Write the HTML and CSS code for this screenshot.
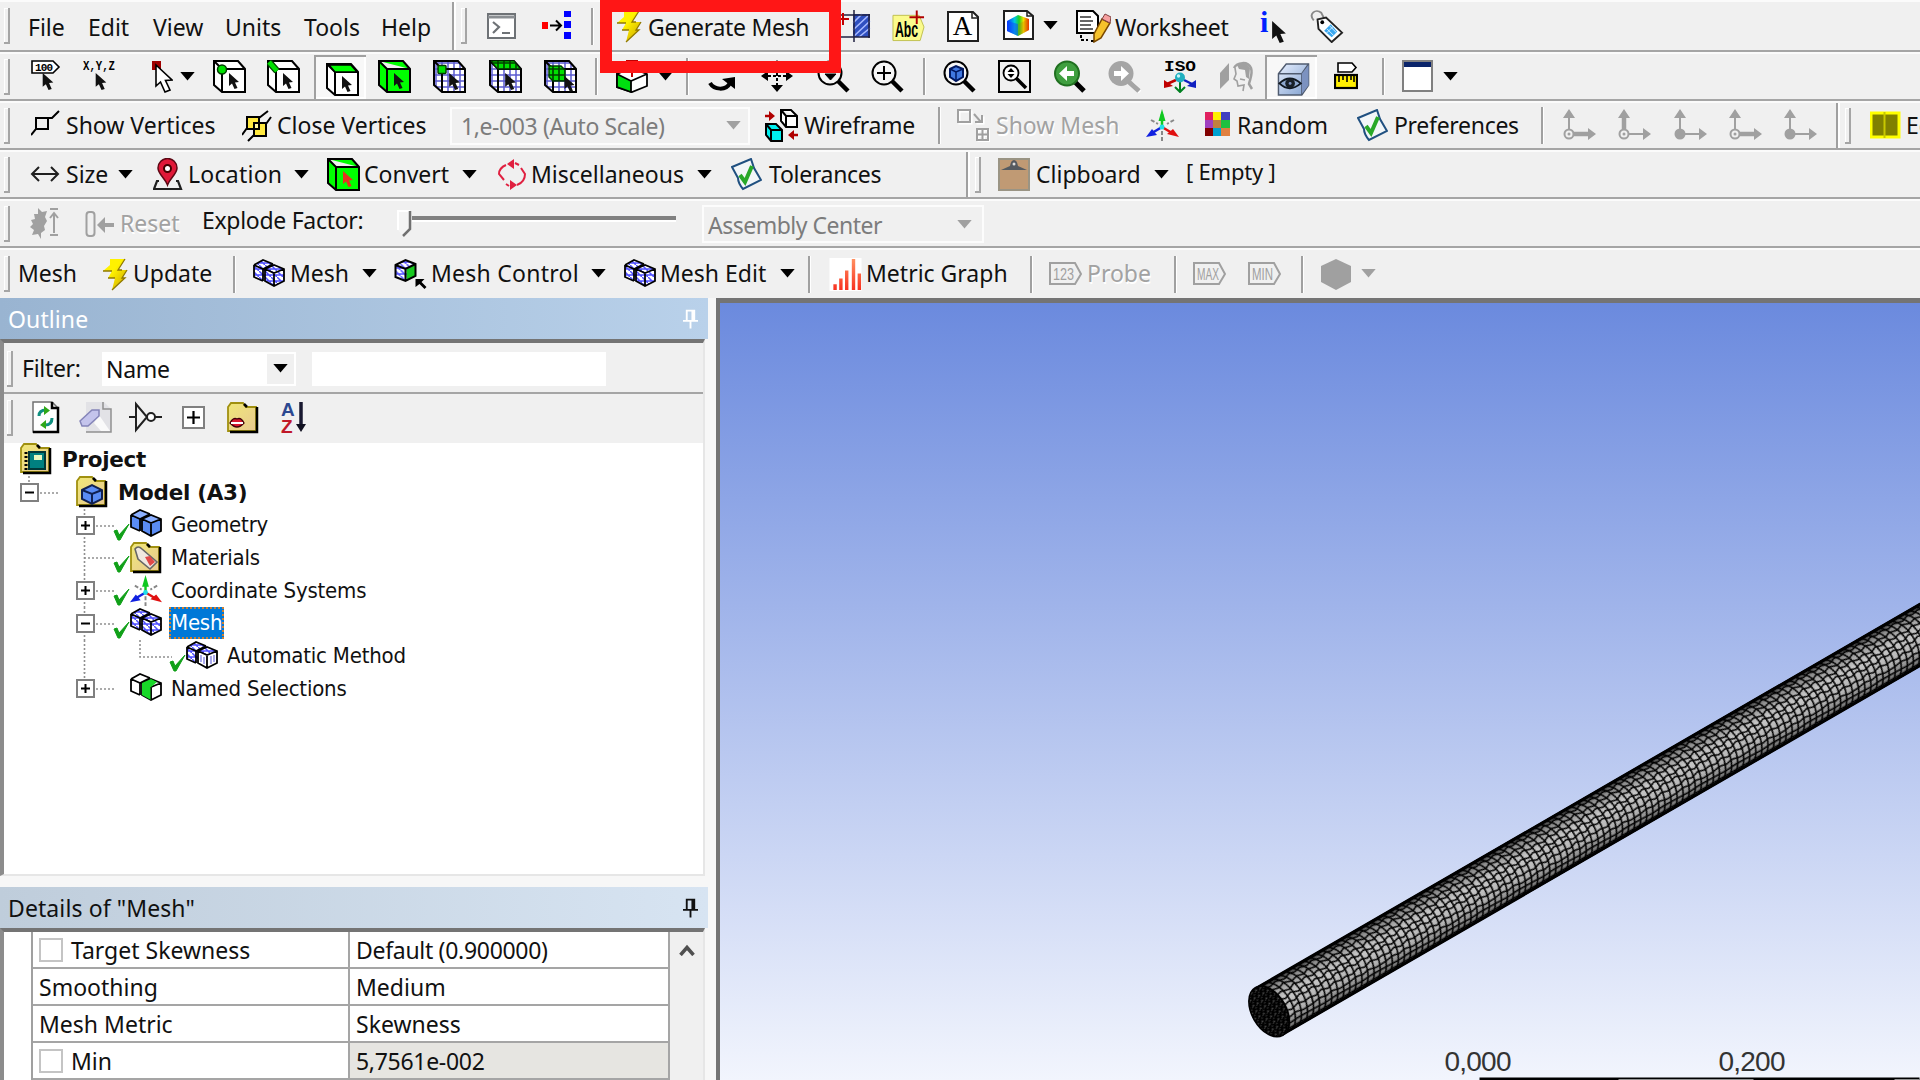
FILE: index.html
```html
<!DOCTYPE html>
<html lang="en">
<head>
<meta charset="utf-8">
<title>Mechanical - Mesh</title>
<link rel="stylesheet" href="styles.css">
</head>
<body>
<svg class="sprite" aria-hidden="true">
  <defs>
    <pattern id="grid" width="6" height="6" patternUnits="userSpaceOnUse"><path d="M0 3H6M3 0V6" stroke="#5a5ad0" stroke-width="1.5"/></pattern>
    <pattern id="ggrid" width="6" height="6" patternUnits="userSpaceOnUse"><rect width="6" height="6" fill="#00e000"/><path d="M0 3H6M3 0V6" stroke="#003c00" stroke-width="1.6"/></pattern>
    <pattern id="lattice" width="6" height="6" patternUnits="userSpaceOnUse"><rect width="6" height="6" fill="#fff"/><path d="M0 0L6 6M0 4H6" stroke="#5050ff" stroke-width="1.5"/></pattern>
    <linearGradient id="bolt-fill" x1="0" y1="0" x2="1" y2="1"><stop offset=".4" stop-color="#fff200"/><stop offset="1" stop-color="#c8a000"/></linearGradient>
    <linearGradient id="rainbow"><stop offset="0" stop-color="#0030ff"/><stop offset=".35" stop-color="#00c8e0"/><stop offset=".55" stop-color="#20d020"/><stop offset=".75" stop-color="#f0e000"/><stop offset="1" stop-color="#f02000"/></linearGradient>
    <linearGradient id="bars" x1="0" y1="0" x2="0" y2="1"><stop offset="0" stop-color="#ff9060"/><stop offset="1" stop-color="#f83020"/></linearGradient>
    <linearGradient id="folder-fill" x1="0" y1="0" x2="1" y2="1"><stop offset="0" stop-color="#f0e878"/><stop offset="1" stop-color="#e8c890"/></linearGradient>
    <linearGradient id="glass" x1="0" y1="0" x2="1" y2="1"><stop offset="0" stop-color="#e8f0ff"/><stop offset="1" stop-color="#7f9fce"/></linearGradient>
  </defs>

  <symbol id="caret" viewBox="0 0 16 10"><path d="M0 0H16L8 9.500Z" fill="currentColor"/></symbol>
  <symbol id="cursor" viewBox="0 0 10 16"><path d="M0 0V13L3 10.500L5.500 16L8.500 15L6 9.500L10 9Z" fill="currentColor"/></symbol>

  <symbol id="console" viewBox="0 0 33 33"><rect x="1" y="4" width="27" height="24" fill="#fff" stroke="#6e7276" stroke-width="2"/><path d="M1 7H28" stroke="#8a8e92" stroke-width="3"/><path d="M6 12L12 17L6 23M15 23H23" fill="none" stroke="#6e7276" stroke-width="2.200"/></symbol>
  <symbol id="net" viewBox="0 0 33 33"><rect y="12" width="6" height="7" fill="#f00"/><path d="M8 15.500H19M14 10.500L19 15.500L14 20.500" fill="none" stroke="#000" stroke-width="2"/><path d="M22 1h7v6h-7zM22 11h7v7h-7zM22 22h7v7h-7z" fill="#00f"/></symbol>
  <symbol id="bolt" viewBox="0 0 26 33"><path d="M8 1H23L16 12H25L20 20H23L10 32L13 20H6L10 13H1L8 7Z" fill="url(#bolt-fill)"/><path d="M23 1L16 12H20M25 12L20 20H23L10 32M13 20H6M10 13H1" fill="none" stroke="#8f7800" stroke-width="1.300"/></symbol>
  <symbol id="section" viewBox="0 0 33 33"><rect x="12" y="4" width="17" height="23" fill="#2f4fc0"/><path d="M12 13L21 4M12 20L28 5M12 27L29 11M18 27L29 18" stroke="#a8baff" stroke-width="1.600"/><path d="M0 5H29M0 27H29M13 0V32M28 4V28" stroke="#202040" stroke-width="1.500" fill="none"/><path d="M0 9H8M2 3V15" stroke="#c00000" stroke-width="2"/></symbol>
  <symbol id="colorpage" viewBox="0 0 33 33"><path d="M1 1H24L30 6V29H1Z" fill="#fff" stroke="#202020" stroke-width="2"/><path d="M24 1V6H30" fill="none" stroke="#202020" stroke-width="1.500"/><path d="M4 11L15 5L26 9V20L15 26L4 21Z" fill="url(#rainbow)"/><path d="M15 14V26L4 21V11Z" fill="#1040ff" opacity=".5"/><path d="M15 14L26 9V20L15 26Z" fill="#d07000" opacity=".3"/></symbol>
  <symbol id="worksheet" viewBox="0 0 35 33"><path d="M1 1H17L22 6V23H1Z" fill="#fff" stroke="#000" stroke-width="2"/><path d="M5 25V30H12M15 31H18" fill="none" stroke="#000" stroke-width="2" stroke-dasharray="3 2"/><path d="M4 7H15M4 11H17M4 15H15M4 19H17" stroke="#333" stroke-width="1.500"/><path d="M26 9L34 13L25 28L18 32V24Z" fill="#f6c22c" stroke="#7a4800" stroke-width="1.500"/><path d="M26 9L29 4L35 7L34 13Z" fill="#f6a0a0" stroke="#804040"/></symbol>
  <symbol id="tag" viewBox="0 0 35 35"><path d="M4 11C-2 4 6 -2 12 3L15 9" fill="none" stroke="#888" stroke-width="2"/><path d="M8 10L17 8L34 24L23 34L9 20Z" fill="#fff" stroke="#222" stroke-width="2"/><path d="M15 22L22 15L29 23L23 29Z" fill="#3aa8f0"/><path d="M18 20L25 27M21 17L28 24M17 25L25 17" stroke="#d8efff"/><circle cx="13" cy="13" r="2"/></symbol>

  <symbol id="redcursor" viewBox="0 0 22 33"><rect x="1" y="1" width="9" height="9" fill="#a00000"/><path d="M5 5V26L9.500 22L14 32L19 30L14.500 20.500L21 20Z" fill="#fff" stroke="#000" stroke-width="1.600"/></symbol>
  <symbol id="cube" viewBox="0 0 33 33"><path d="M1 1H25L32 9V32H9L1 25Z" fill="#fff"/><path d="M1 1H25L32 9V32H9L1 25ZM1 1L9 9H32M9 9V32" fill="none" stroke="#000" stroke-width="2"/></symbol>
  <symbol id="cubemesh" viewBox="0 0 33 33"><path d="M1 1H25L32 9V32H9L1 25Z" fill="#fff"/><path d="M1 1H25L32 9V32H9L1 25Z" fill="url(#grid)"/><path d="M1 1H25L32 9V32H9L1 25ZM1 1L9 9H32M9 9V32" fill="none" stroke="#000" stroke-width="2"/></symbol>
  <symbol id="c-vertex" viewBox="0 0 33 33"><use href="#cube"/><circle cx="9" cy="9.500" r="4.500" fill="#00e000" stroke="#003c00" stroke-width="1.500"/><use href="#cursor" x="16" y="13" width="10" height="16"/></symbol>
  <symbol id="c-edge" viewBox="0 0 33 33"><use href="#cube"/><path d="M2 2L10 11" stroke="#004000" stroke-width="7"/><path d="M2 2L10 11" stroke="#00e000" stroke-width="4.500"/><use href="#cursor" x="16" y="13" width="10" height="16"/></symbol>
  <symbol id="c-face" viewBox="0 0 33 33"><use href="#cube"/><path d="M3 2H25L31 9H9Z" fill="#0f0" stroke="#000" stroke-width="1.500"/><use href="#cursor" x="16" y="13" width="10" height="16"/></symbol>
  <symbol id="c-body" viewBox="0 0 33 33"><path d="M1 1H25L32 9V32H9L1 25ZM1 1L9 9H32M9 9V32" fill="#0f0" stroke="#000" stroke-width="2"/><use href="#cursor" x="16" y="13" width="10" height="16"/></symbol>
  <symbol id="c-node" viewBox="0 0 33 33"><use href="#cubemesh"/><rect x="5" y="5.500" width="8" height="8" rx="1" fill="#00e000" stroke="#003c00" stroke-width="1.500"/><use href="#cursor" x="16" y="13" width="11" height="17"/></symbol>
  <symbol id="c-elface" viewBox="0 0 33 33"><use href="#cubemesh"/><path d="M2 1H25L31 9H9Z" fill="url(#ggrid)" stroke="#003c00"/><use href="#cursor" x="16" y="13" width="11" height="17"/></symbol>
  <symbol id="c-elem" viewBox="0 0 33 33"><use href="#cubemesh"/><path d="M5 6H17L21 10V21H9L5 17Z" fill="url(#ggrid)" stroke="#003c00" stroke-width="1.500"/><use href="#cursor" x="20" y="16" width="11" height="16"/></symbol>
  <symbol id="extend" viewBox="0 0 33 33"><path d="M1 14L15 8L31 14V26L16 32L1 27Z" fill="#fff" stroke="#000" stroke-width="1.800"/><path d="M1 14L15 21V32L1 27Z" fill="#00e010" stroke="#000" stroke-width="1.800"/><path d="M15 21L31 14" stroke="#000" stroke-width="1.800"/><path d="M16 2V17M10 1H22" stroke="#c00000" stroke-width="2"/></symbol>
  <symbol id="rotate" viewBox="0 0 33 33"><path d="M10 2H18" stroke="#000" stroke-width="2"/><path d="M2 23C6 30 18 31 22 23" fill="none" stroke="#000" stroke-width="4"/><path d="M14 19L27 17V29Z"/></symbol>
  <symbol id="pan" viewBox="0 0 33 33"><path d="M16 3V30M2 16H30" stroke="#000" stroke-width="2" stroke-dasharray="3 2"/><path d="M16 32L10 25H22ZM0 16L7 11V21ZM32 16L25 11V21ZM16 0L10 7H22Z"/></symbol>
  <symbol id="lens" viewBox="0 0 33 33"><circle cx="13" cy="13" r="11.500" fill="#f6f6f6" stroke="#000" stroke-width="2"/><path d="M21 21L31 31" stroke="#000" stroke-width="4.500"/></symbol>
  <symbol id="zoomdown" viewBox="0 0 33 33"><use href="#lens"/><path d="M8 14H19L13.500 20Z" stroke="#000"/></symbol>
  <symbol id="zoomplus" viewBox="0 0 33 33"><use href="#lens"/><path d="M13 6V20M6 13H20" stroke="#000" stroke-width="2"/></symbol>
  <symbol id="zoomfit" viewBox="0 0 33 33"><use href="#lens"/><path d="M7 9L13 6L20 9V17L13 21L7 17Z" fill="#4078e0" stroke="#001860" stroke-width="2"/><path d="M7 9L13 12L20 9M13 12V21" stroke="#001860" stroke-width="1.500" fill="none"/></symbol>
  <symbol id="zoombox" viewBox="0 0 33 33"><rect x="1" y="1" width="31" height="31" fill="none" stroke="#000" stroke-width="2"/><circle cx="13" cy="13" r="7.500" fill="#fff" stroke="#000" stroke-width="1.800"/><path d="M18 18L28 28" stroke="#000" stroke-width="3.500"/><path d="M9.500 12L13 8L16.500 12ZM9.500 14L13 18L16.500 14Z"/></symbol>
  <symbol id="zoomprev" viewBox="0 0 33 33"><path d="M22 22L31 31" stroke="#000" stroke-width="5"/><circle cx="14" cy="13.500" r="12" fill="#3f9f3f" stroke="#207020" stroke-width="2"/><path d="M6 13.500L14 6V11H21V16H14V21Z" fill="#fff"/></symbol>
  <symbol id="zoomnext" viewBox="0 0 33 33"><path d="M24 24L32 32" stroke="#fff" stroke-width="5"/><circle cx="13" cy="13.500" r="12.500" fill="#a5a5a5"/><path d="M21 22L31 31" stroke="#a5a5a5" stroke-width="5"/><path d="M21 13.500L13 6V11H6V16H13V21Z" fill="#fff"/></symbol>
  <symbol id="lookat" viewBox="0 0 35 33"><path d="M1 13L10 3V20L1 29Z" fill="#a0a0a0"/><path d="M15 8C18 2 29 1 32 8C34 14 31 19 30 24L33 29" fill="none" stroke="#a0a0a0" stroke-width="2.500"/><path d="M16 8L17 14L15 19L18 21L19 26L25 25L24 31M21 19L26 20" fill="none" stroke="#a0a0a0" stroke-width="1.600"/><path d="M18 5Q27 1 31 8L30 19L27 17L26 10L20 9Z" fill="#a0a0a0"/></symbol>
  <symbol id="cubeeye" viewBox="0 0 33 34"><path d="M1 11L9 1H32V23L25 33H1Z" fill="url(#glass)" stroke="#505c70" stroke-width="1.500"/><path d="M1 11H25V33M25 11L32 1" fill="none" stroke="#505c70" stroke-width="1.500"/><path d="M25 11L32 2V23L25 32Z" fill="#7c92c0"/><path d="M2 21Q12.500 11 24 21Q12.500 31 2 21Z" fill="#8fa9d0" stroke="#101820" stroke-width="2"/><circle cx="13" cy="21" r="5" fill="#182028"/><circle cx="13" cy="21" r="1.500" fill="#7c92c0"/></symbol>
  <symbol id="ruler" viewBox="0 0 24 33"><path d="M4 3H18L22 7.500L18 12H4Z" fill="#fff" stroke="#000" stroke-width="1.600"/><rect x="1" y="15" width="22" height="13" fill="#ffee00" stroke="#000" stroke-width="2.200"/><path d="M5 15V22M9 15V20M13 15V22M17 15V20M20 15V22" stroke="#000" stroke-width="1.600"/></symbol>
  <symbol id="window" viewBox="0 0 33 33"><rect x="1" y="1" width="29" height="30" fill="#fff" stroke="#808080" stroke-width="2"/><rect x="2" y="2" width="27" height="5" fill="#0a246a"/></symbol>

  <symbol id="vertices" viewBox="0 0 33 33"><path d="M0 26L5 20V9H17V20H5M17 9H21L28 2" fill="none" stroke="#000" stroke-width="2"/></symbol>
  <symbol id="closev" viewBox="0 0 33 33"><path d="M0 26L5 19M5 8H17V20H5Z" fill="#ffe940" stroke="#000" stroke-width="2"/><path d="M12 14H24V27H12Z" fill="#ffe940" stroke="#000" stroke-width="2"/><path d="M12 14H17V20H12Z" fill="#fff7a0" stroke="#000" stroke-width="2"/><path d="M17 9L26 2M24 15L29 8M12 26L6 32" stroke="#000" stroke-width="2"/></symbol>
  <symbol id="wire" viewBox="0 0 33 33"><path d="M16 1H26L32 7V18H21L16 12ZM16 1L21 7H32M21 7V18" fill="#fff" stroke="#000" stroke-width="2"/><path d="M1 15H11L17 21V32H6L1 26Z" fill="#00f0f0" stroke="#000" stroke-width="2"/><path d="M1 15L6 21H17M6 21V32" fill="none" stroke="#000" stroke-width="2"/><path d="M0 7H6M33 26H27" stroke="#b00000" stroke-width="2.500"/><path d="M10 7L4 2V12ZM23 26L29 21V31Z" fill="#b00000"/></symbol>
  <symbol id="showmesh" viewBox="0 0 33 33"><g fill="none" stroke="#fff" stroke-width="2" transform="translate(1.500 1.500)"><path d="M1 1H13V13H1ZM17 5L24 13M25 6V13H18M20 20H31V31H20ZM25.500 20V31M20 25.500H31"/></g><g fill="none" stroke="#a0a0a0" stroke-width="2"><path d="M1 1H13V13H1ZM17 5L24 13M25 6V13H18M20 20H31V31H20ZM25.500 20V31M20 25.500H31"/></g></symbol>
  <symbol id="axes" viewBox="0 0 33 33"><path d="M16 18V5" stroke="#10c820" stroke-width="2.500"/><path d="M16 0L12.500 12H19.500Z" fill="#10c820"/><path d="M16 18L6 24" stroke="#1020e0" stroke-width="2.500"/><path d="M0 28L6 20L11 26Z" fill="#1020e0"/><path d="M16 18L26 24" stroke="#e01010" stroke-width="2.500"/><path d="M33 28L27 20L21 25Z" fill="#e01010"/><path d="M5 11L12 15M28 11L21 15M16 22V33" stroke="#888" stroke-width="2" stroke-dasharray="4 2"/><circle cx="16" cy="18" r="2.500" fill="#20e0e8"/></symbol>
  <symbol id="random" viewBox="0 0 33 33"><path fill="#e02060" d="M0 3h8v8H0z"/><path fill="#fff000" d="M8 3h8v8H8z"/><path fill="#4040c0" d="M16 3h9v8h-9z"/><path fill="#a040c0" d="M0 11h8v8H0z"/><path fill="#c08040" d="M8 11h8v8H8z"/><path fill="#20c040" d="M16 11h9v8h-9z"/><path fill="#800000" d="M0 19h8v8H0z"/><path fill="#00a0d0" d="M8 19h8v8H8z"/><path fill="#e08040" d="M16 19h9v8h-9z"/></symbol>
  <symbol id="prefs" viewBox="0 0 31 33"><path d="M1 9L20 1L23 10L30 22L12 31Q7 25 7 20Z" fill="#f2f6f8" stroke="#205080" stroke-width="2"/><path d="M9 17L14 24L21 8" fill="none" stroke="#28a828" stroke-width="4"/></symbol>
  <symbol id="ax-a" viewBox="0 0 33 33"><path d="M6 20V5M10 25H26" stroke="#a0a0a0" stroke-width="2"/><path d="M6 0L0 9H12ZM33 25L25 19V31Z" fill="#a0a0a0"/><circle cx="6" cy="25" r="4.500" fill="none" stroke="#a0a0a0" stroke-width="2"/><circle cx="6" cy="25" r="1.500" fill="#a0a0a0"/></symbol>
  <symbol id="ax-b" viewBox="0 0 33 33"><path d="M6 25V5M6 25H26" stroke="#a0a0a0" stroke-width="2"/><path d="M6 0L0 9H12ZM33 25L25 19V31Z" fill="#a0a0a0"/><circle cx="6" cy="25" r="5.500" fill="#a0a0a0"/></symbol>
  <symbol id="ax-bold" viewBox="0 0 33 33"><use href="#ax-a"/><path d="M10 25H27" stroke="#a0a0a0" stroke-width="4.500"/></symbol>
  <symbol id="ax-up" viewBox="0 0 33 33"><use href="#ax-a"/><path d="M6 20V5" stroke="#a0a0a0" stroke-width="4.500"/></symbol>
  <symbol id="edges" viewBox="0 0 31 33"><rect x="1" y="4" width="28" height="24" fill="#808000" stroke="#ffff00" stroke-width="3"/><path d="M14.500 3V29" stroke="#c8c800" stroke-width="2"/></symbol>

  <symbol id="size" viewBox="0 0 31 33"><path d="M2 16H28M9 9L2 16L9 23M21 9L28 16L21 23" fill="none" stroke="#202020" stroke-width="2"/></symbol>
  <symbol id="location" viewBox="0 0 31 33"><path d="M6 23H4L1 31H28L25 23H23" fill="none" stroke="#202020" stroke-width="2.200"/><path d="M14.500 27C12 20 5 16 5 10A9.500 9.500 0 0 1 24 10C24 16 17 20 14.500 27Z" fill="#e01838" stroke="#5c0814" stroke-width="1.500"/><circle cx="14.500" cy="10.500" r="3.500" fill="#fff" stroke="#400" stroke-width="2"/></symbol>
  <symbol id="convert" viewBox="0 0 33 33"><path d="M1 1H25L32 9V32H9L1 25ZM1 1L9 9H32M9 9V32" fill="#0f0" stroke="#000" stroke-width="2"/><use href="#cursor" x="16" y="13" width="10" height="16" color="#e83020"/></symbol>
  <symbol id="misc" viewBox="0 0 31 33"><path d="M9 7Q2 10 2 16L7 22M20 27Q28 24 28 16L24 10M18 5L22 7M9 26L12 28" fill="none" stroke="#e02040" stroke-width="2"/><path d="M10 6L17 1V11ZM20 27L13 22V32Z" fill="#e02040"/></symbol>
  <symbol id="clipboard" viewBox="0 0 33 33"><rect x="1" y="1" width="30" height="31" fill="#c09a74" stroke="#9a9484" stroke-width="2"/><path d="M3 12L12 8Q13 2 16 2Q19 2 20 8L29 12Z" fill="#555a60"/><circle cx="16" cy="6" r="1.500" fill="#ddd"/></symbol>

  <symbol id="explode" viewBox="0 0 31 33"><path d="M8 1L12 5L17 4L15 10L17 14L14 19L15 23L11 26V32L8 27L2 28L4 23L0 20L3 17L1 13L5 12L4 7L8 7Z" fill="#a0a0a0"/><path d="M20 2H28M20 28H28M24 26V7M20 11L24 6L28 11" fill="none" stroke="#a0a0a0" stroke-width="2"/></symbol>
  <symbol id="reset" viewBox="0 0 31 33"><rect x="1.500" y="5" width="8" height="24" rx="3" fill="none" stroke="#a0a0a0" stroke-width="2"/><path d="M16 18H29" stroke="#a0a0a0" stroke-width="4"/><path d="M12 18L20 10V26Z" fill="#a0a0a0"/></symbol>

  <symbol id="pair-lines" viewBox="0 0 32 28"><path d="M1 6L10 1L20 5M1 6V18L10 22M1 6L10 10L20 5M10 10V22M12 10L21 6L31 10V22L21 27L12 22ZM12 10L21 14L31 10M21 14V27" fill="none" stroke="#000" stroke-width="1.800"/></symbol>
  <symbol id="geometry" viewBox="0 0 32 28"><path d="M1 6L10 1L20 5L31 10V22L21 27L12 22L1 18Z" fill="#5a8cf4"/><path d="M1 6L10 1L20 5L10 10ZM12 10L21 6L31 10L21 14Z" fill="#8cb0ff"/><use href="#pair-lines"/></symbol>
  <symbol id="mesh" viewBox="0 0 32 28"><path d="M1 6L10 1L20 5L31 10V22L21 27L12 22L1 18Z" fill="url(#lattice)"/><use href="#pair-lines"/></symbol>
  <symbol id="method" viewBox="0 0 32 28"><path d="M1 6L10 1L20 5L31 10V22L21 27L12 22L1 18Z" fill="url(#lattice)"/><path d="M12 10L21 14V27L12 22ZM31 10L21 14V27L31 22Z" fill="#fff"/><path d="M15 14V21M18 16V23M25 15V23M28 14V21" stroke="#7070e0" stroke-width="1.200"/><use href="#pair-lines"/></symbol>
  <symbol id="named" viewBox="0 0 32 28"><path d="M1 6L10 1L20 5L31 10V22L21 27L12 22L1 18Z" fill="#fff"/><use href="#pair-lines"/><path d="M12 10L21 6L27 9L21 14V27L12 22Z" fill="#18d828"/><path d="M21 14V27" stroke="#000"/></symbol>
  <symbol id="meshctl" viewBox="0 0 32 33"><path d="M1 7L11 2L21 6V18L11 23L1 19Z" fill="url(#lattice)"/><path d="M12 10L21 6V18L12 23Z" fill="#18c820"/><path d="M1 7L11 2L21 6V18L11 23L1 19ZM1 7L11 11L21 6M11 11V23" fill="none" stroke="#000" stroke-width="2"/><path d="M21 21H30L27 24L32 29L30 31L25 26L21 29Z"/></symbol>
  <symbol id="metric" viewBox="0 0 33 34"><rect width="33" height="34" fill="#fff"/><path d="M4 27h3.500v6H4zM10 21h3.500v12h-3.500zM16 13h3.500v20h-3.500zM23 1h3.500v32h-3.500zM29 16h3.500v17h-3.500z" fill="url(#bars)"/></symbol>
  <symbol id="hexagon" viewBox="0 0 33 33"><path d="M16 1L31 8V24L16 32L1 24V8Z" fill="#a0a0a0"/></symbol>

  <symbol id="pin" viewBox="0 0 16 20"><path d="M4 1H12V12H4ZM0 12H16M8 12V20" fill="none" stroke="currentColor" stroke-width="2"/><path d="M9 1H12V12H9Z" fill="currentColor"/></symbol>
  <symbol id="refresh" viewBox="0 0 28 33"><path d="M1 1H20L26 7V31H1Z" fill="#fff" stroke="#707070" stroke-width="1.500"/><path d="M20 1V7H26V31H1" fill="none" stroke="#000" stroke-width="2.500"/><path d="M7 15C7 10 10 9 14 9M20 17C20 22 17 24 13 24" fill="none" stroke="#109080" stroke-width="3"/><path d="M12 5L18 9.500L12 14ZM14 19L8 24L14 28Z" fill="#30a818"/></symbol>
  <symbol id="eraser" viewBox="0 0 33 33"><path d="M7 1H25L32 8V31H7Z" fill="#e2e2e6"/><path d="M24 1V8H32V31H7" fill="none" stroke="#909090" stroke-width="1.500"/><path d="M20 14L31 30H22L15 22Z" fill="#fafafa"/><path d="M1 20L13 9L20 9V15L9 25H3Z" fill="#c4c4ec" stroke="#8484b8" stroke-width="1.500"/></symbol>
  <symbol id="notgate" viewBox="0 0 33 33"><path d="M0 16H7M7 3V29L18 16ZM26 16H33" fill="none" stroke="#202020" stroke-width="2"/><circle cx="22" cy="16" r="4" fill="#fff" stroke="#202020" stroke-width="2"/></symbol>
  <symbol id="plusbox" viewBox="0 0 23 23"><rect x="1" y="1" width="21" height="21" fill="#fff" stroke="#808080" stroke-width="2"/><path d="M11.500 5V18M5 11.500H18" stroke="#000" stroke-width="2.200"/></symbol>
  <symbol id="folder" viewBox="0 0 32 32"><path d="M1 5L4 1H16L19 5H29V29H1Z" fill="url(#folder-fill)" stroke="#a09010" stroke-width="1.800"/><path d="M17 2L20 5M30 5V30H3" fill="none" stroke="#000" stroke-width="2.500"/></symbol>
  <symbol id="f-lips" viewBox="0 0 32 32"><use href="#folder"/><path d="M3 21Q6 15 10 17Q14 15 17 21Q10 29 3 21Z" fill="#d81830" stroke="#400008" stroke-width="1.300"/><path d="M4 21H16" stroke="#fff" stroke-width="2"/></symbol>
  <symbol id="f-project" viewBox="0 0 32 32"><use href="#folder"/><rect x="9" y="9" width="16" height="17" fill="#008080" stroke="#003838" stroke-width="2"/><rect x="14" y="12" width="8" height="5" fill="#e8f8c0"/><path d="M6 9V28" stroke="#000" stroke-width="3" stroke-dasharray="2 2"/></symbol>
  <symbol id="f-model" viewBox="0 0 32 32"><use href="#folder"/><path d="M6 14L16 9L26 14V23L16 28L6 23Z" fill="#5a8cf4" stroke="#102050" stroke-width="2"/><path d="M6 14L16 18L26 14M16 18V28" fill="none" stroke="#102050" stroke-width="2"/></symbol>
  <symbol id="f-material" viewBox="0 0 32 32"><use href="#folder"/><path d="M5 7Q8 3 12 7L27 20L20 27L8 17Z" fill="#f0e8e0" stroke="#666" stroke-width="1.600"/><path d="M15 15L20 14L25 20L20 24Z" fill="#e04848"/></symbol>
  <symbol id="check" viewBox="0 0 17 33"><path d="M1 22L4 21L6 26L16 15L7 31H5Z" fill="#10a018" stroke="#10a018"/></symbol>

  <symbol id="t-root" viewBox="0 0 40 33"><path d="M9 0V8M20 17H40" class="dots"/><rect x="1" y="8" width="17" height="17" fill="#fff" stroke="#808080" stroke-width="2"/><path d="M5 16.500H14" stroke="#000" stroke-width="2"/></symbol>
  <symbol id="t-plus" viewBox="0 0 40 33"><path d="M8.500 0V33M20 17H40" class="dots"/><rect x="1" y="8" width="17" height="17" fill="#fff" stroke="#808080" stroke-width="2"/><path d="M5 16.500H14M9.500 12V21" stroke="#000" stroke-width="2"/></symbol>
  <symbol id="t-last" viewBox="0 0 40 33"><path d="M8.500 0V8M20 17H40" class="dots"/><rect x="1" y="8" width="17" height="17" fill="#fff" stroke="#808080" stroke-width="2"/><path d="M5 16.500H14M9.500 12V21" stroke="#000" stroke-width="2"/></symbol>
  <symbol id="t-minus" viewBox="0 0 40 33"><path d="M8.500 0V33M20 17H40" class="dots"/><rect x="1" y="8" width="17" height="17" fill="#fff" stroke="#808080" stroke-width="2"/><path d="M5 16.500H14" stroke="#000" stroke-width="2"/></symbol>
  <symbol id="t-leaf" viewBox="0 0 40 33"><path d="M8.500 0V33M8 17H40" class="dots"/></symbol>
  <symbol id="t-child" viewBox="0 0 96 33"><path d="M8.500 0V33M64 0V17H96" class="dots"/></symbol>
</svg>

<header class="toolbars">
  <nav class="bar bar-menu">
    <i class="grip"></i><span>File</span><span>Edit</span><span>View</span><span>Units</span><span>Tools</span><span>Help</span>
    <i class="edge"></i><i class="grip"></i>
    <svg class="ic"><use href="#console"/></svg>
    <svg class="ic"><use href="#net"/></svg>
    <i class="sep"></i>
    <svg class="ic w26"><use href="#bolt"/></svg><span class="tight">Generate Mesh</span>
    <svg class="ic"><use href="#section"/></svg>
    <svg class="ic" viewBox="0 0 34 33"><path d="M1 5H28L33 17L29 31H1Z" fill="#fbfb8c" stroke="#c0c050"/><text x="3" y="27" class="ic-abc" textLength="24" lengthAdjust="spacingAndGlyphs">Abc</text><path d="M18 7H33M25.500 0V14" stroke="#b00000" stroke-width="2"/></svg>
    <svg class="ic" viewBox="0 0 33 33"><path d="M1 2H26L31 7V31H1Z" fill="#fff" stroke="#202020" stroke-width="2"/><path d="M25 2V8H31" fill="none" stroke="#202020" stroke-width="1.500"/><text x="15.500" y="25" text-anchor="middle" class="ic-serif">A</text></svg>
    <svg class="ic"><use href="#colorpage"/></svg>
    <svg class="caret"><use href="#caret"/></svg>
    <svg class="ic w35"><use href="#worksheet"/></svg><span class="tight">Worksheet</span>
    <svg class="ic w28" viewBox="0 0 28 33"><text x="0" y="22" class="ic-i">i</text><use href="#cursor" x="12" y="11" width="14" height="22"/></svg>
    <svg class="ic w35"><use href="#tag"/></svg>
  </nav>

  <div class="bar bar-select">
    <i class="grip"></i>
    <svg class="ic" viewBox="0 0 33 33"><path d="M1 1H22L28 7L22 13H1Z" fill="#fff" stroke="#000" stroke-width="1.600"/><text x="4" y="11" class="ic-mono" textLength="18">100</text><use href="#cursor" x="11" y="13" width="12" height="17"/></svg>
    <svg class="ic" viewBox="0 0 33 33"><text x="0" y="10" class="ic-xyz" textLength="32" lengthAdjust="spacingAndGlyphs">X,Y,Z</text><use href="#cursor" x="12" y="13" width="12" height="17"/></svg>
    <svg class="ic w22"><use href="#redcursor"/></svg>
    <svg class="caret"><use href="#caret"/></svg>
    <svg class="ic"><use href="#c-vertex"/></svg>
    <svg class="ic"><use href="#c-edge"/></svg>
    <b class="pressed"><svg class="ic"><use href="#c-face"/></svg></b>
    <svg class="ic"><use href="#c-body"/></svg>
    <svg class="ic"><use href="#c-node"/></svg>
    <svg class="ic"><use href="#c-elface"/></svg>
    <svg class="ic"><use href="#c-elem"/></svg>
    <i class="sep"></i>
    <svg class="ic"><use href="#extend"/></svg>
    <svg class="caret"><use href="#caret"/></svg>
    <i class="sep"></i>
    <svg class="ic"><use href="#rotate"/></svg>
    <svg class="ic"><use href="#pan"/></svg>
    <svg class="ic"><use href="#zoomdown"/></svg>
    <svg class="ic"><use href="#zoomplus"/></svg>
    <i class="sep"></i>
    <svg class="ic"><use href="#zoomfit"/></svg>
    <svg class="ic"><use href="#zoombox"/></svg>
    <svg class="ic"><use href="#zoomprev"/></svg>
    <svg class="ic"><use href="#zoomnext"/></svg>
    <svg class="ic" viewBox="0 0 33 33"><text x="0" y="10.500" class="ic-iso" textLength="32" lengthAdjust="spacingAndGlyphs">ISO</text><path d="M16 17V32M11 27L16 32L21 27" stroke="#008020" stroke-width="2" fill="none"/><path d="M12 20L3 24" stroke="#c00000" stroke-width="2.500"/><path d="M0 20V28L9 26Z" fill="#c00000"/><path d="M20 20L28 24" stroke="#1020c0" stroke-width="2.500"/><path d="M32 20V28L23 26Z" fill="#1020c0"/><circle cx="16" cy="17.500" r="5" fill="#20b0c0"/><circle cx="14.500" cy="16" r="1.700" fill="#c8f4f8"/></svg>
    <svg class="ic w35"><use href="#lookat"/></svg>
    <b class="pressed"><svg class="ic"><use href="#cubeeye"/></svg></b>
    <svg class="ic w24"><use href="#ruler"/></svg>
    <i class="sep"></i>
    <svg class="ic"><use href="#window"/></svg>
    <svg class="caret"><use href="#caret"/></svg>
  </div>

  <div class="bar bar-graphics">
    <i class="grip"></i>
    <svg class="ic"><use href="#vertices"/></svg><span>Show Vertices</span>
    <svg class="ic"><use href="#closev"/></svg><span>Close Vertices</span>
    <div class="combo"><span>1,e-003 (Auto Scale)</span><svg class="caret"><use href="#caret"/></svg></div>
    <svg class="ic"><use href="#wire"/></svg><span class="tight">Wireframe</span>
    <i class="sep"></i>
    <svg class="ic"><use href="#showmesh"/></svg><span class="off">Show Mesh</span>
    <svg class="ic"><use href="#axes"/></svg>
    <svg class="ic"><use href="#random"/></svg><span>Random</span>
    <svg class="ic w31"><use href="#prefs"/></svg><span class="tight">Preferences</span>
    <i class="sep"></i>
    <svg class="ic"><use href="#ax-bold"/></svg>
    <svg class="ic"><use href="#ax-up"/></svg>
    <svg class="ic"><use href="#ax-b"/></svg>
    <svg class="ic"><use href="#ax-bold"/></svg>
    <svg class="ic"><use href="#ax-b"/></svg>
    <i class="edge"></i><i class="grip"></i>
    <svg class="ic w31"><use href="#edges"/></svg><span>Edge</span>
  </div>

  <div class="bar bar-size">
    <i class="grip"></i>
    <svg class="ic w31"><use href="#size"/></svg><span>Size</span><svg class="caret"><use href="#caret"/></svg>
    <svg class="ic w31"><use href="#location"/></svg><span class="wide">Location</span><svg class="caret"><use href="#caret"/></svg>
    <svg class="ic"><use href="#convert"/></svg><span>Convert</span><svg class="caret"><use href="#caret"/></svg>
    <svg class="ic w31"><use href="#misc"/></svg><span>Miscellaneous</span><svg class="caret"><use href="#caret"/></svg>
    <svg class="ic w31"><use href="#prefs"/></svg><span class="tight">Tolerances</span>
    <i class="edge"></i><i class="grip"></i>
    <svg class="ic"><use href="#clipboard"/></svg><span>Clipboard</span><svg class="caret"><use href="#caret"/></svg>
    <span class="raised small">[ Empty ]</span>
  </div>

  <div class="bar bar-explode">
    <i class="grip"></i>
    <svg class="ic w31"><use href="#explode"/></svg>
    <svg class="ic w31"><use href="#reset"/></svg><span class="off">Reset</span>
    <span class="raised tight">Explode Factor:</span>
    <div class="slider"><svg class="thumb" viewBox="0 0 15 27"><path d="M1 1H13V19L6 26L1 20Z" fill="#f4f4f4"/><path d="M1 20V1H13" fill="none" stroke="#fff" stroke-width="2"/><path d="M13 1V19L6 26" fill="none" stroke="#707070" stroke-width="2.500"/></svg><i class="track"></i></div>
    <div class="combo"><span>Assembly Center</span><svg class="caret"><use href="#caret"/></svg></div>
  </div>

  <div class="bar bar-mesh">
    <i class="grip"></i><span>Mesh</span>
    <svg class="ic w26"><use href="#bolt"/></svg><span>Update</span>
    <i class="sep"></i>
    <svg class="ic pair"><use href="#mesh"/></svg><span>Mesh</span><svg class="caret"><use href="#caret"/></svg>
    <svg class="ic"><use href="#meshctl"/></svg><span class="wide">Mesh Control</span><svg class="caret"><use href="#caret"/></svg>
    <svg class="ic pair"><use href="#mesh"/></svg><span>Mesh Edit</span><svg class="caret"><use href="#caret"/></svg>
    <i class="sep"></i>
    <svg class="ic"><use href="#metric"/></svg><span>Metric Graph</span>
    <i class="sep"></i>
    <svg class="ic tagic" viewBox="0 0 33 24"><path d="M1 1H26L32 12L26 22H1Z" fill="none" stroke="#a0a0a0" stroke-width="2"/><text x="4" y="18" class="ic-tag" textLength="21" lengthAdjust="spacingAndGlyphs">123</text></svg><span class="off">Probe</span>
    <i class="sep"></i>
    <svg class="ic tagic" viewBox="0 0 33 24"><path d="M1 1H26L32 12L26 22H1Z" fill="none" stroke="#a0a0a0" stroke-width="2"/><text x="4" y="18" class="ic-tag" textLength="22" lengthAdjust="spacingAndGlyphs">MAX</text></svg>
    <svg class="ic tagic" viewBox="0 0 33 24"><path d="M1 1H26L32 12L26 22H1Z" fill="none" stroke="#a0a0a0" stroke-width="2"/><text x="4" y="18" class="ic-tag" textLength="21" lengthAdjust="spacingAndGlyphs">MIN</text></svg>
    <i class="sep"></i>
    <svg class="ic"><use href="#hexagon"/></svg>
    <svg class="caret gray"><use href="#caret"/></svg>
  </div>

  <div class="callout"></div>
</header>

<main class="work">
  <aside class="side">
    <section class="panel outline">
      <h2 class="title active"><span>Outline</span><svg class="pin"><use href="#pin"/></svg></h2>
      <div class="body">
        <div class="filter">
          <i class="grip"></i><span>Filter:</span>
          <div class="select"><span>Name</span><b><svg class="caret"><use href="#caret"/></svg></b></div>
          <div class="input"></div>
        </div>
        <div class="treebar">
          <i class="grip"></i>
          <svg class="ic w28"><use href="#refresh"/></svg>
          <svg class="ic"><use href="#eraser"/></svg>
          <svg class="ic"><use href="#notgate"/></svg>
          <svg class="ic plus"><use href="#plusbox"/></svg>
          <svg class="ic f"><use href="#f-lips"/></svg>
          <svg class="ic w26" viewBox="0 0 26 33"><text x="0" y="15" class="ic-az az-a">A</text><text x="0" y="32" class="ic-az az-z">Z</text><path d="M20 1V26" stroke="#181830" stroke-width="3.500"/><path d="M15 23H25L20 31Z" fill="#101020"/></svg>
        </div>
        <ul class="tree">
          <li class="l0"><svg class="f"><use href="#f-project"/></svg><strong>Project</strong></li>
          <li class="l1"><svg class="twig"><use href="#t-root"/></svg><svg class="f"><use href="#f-model"/></svg><strong>Model (A3)</strong></li>
          <li class="l2"><svg class="twig"><use href="#t-plus"/></svg><svg class="ok"><use href="#check"/></svg><svg class="pair"><use href="#geometry"/></svg><span>Geometry</span></li>
          <li class="l2"><svg class="twig"><use href="#t-leaf"/></svg><svg class="ok"><use href="#check"/></svg><svg class="f"><use href="#f-material"/></svg><span>Materials</span></li>
          <li class="l2"><svg class="twig"><use href="#t-plus"/></svg><svg class="ok"><use href="#check"/></svg><svg class="f"><use href="#axes"/></svg><span>Coordinate Systems</span></li>
          <li class="l2"><svg class="twig"><use href="#t-minus"/></svg><svg class="ok"><use href="#check"/></svg><svg class="pair"><use href="#mesh"/></svg><span class="selected">Mesh</span></li>
          <li class="l2"><svg class="twig child"><use href="#t-child"/></svg><svg class="ok"><use href="#check"/></svg><svg class="pair"><use href="#method"/></svg><span>Automatic Method</span></li>
          <li class="l2"><svg class="twig"><use href="#t-last"/></svg><svg class="ok"></svg><svg class="pair"><use href="#named"/></svg><span>Named Selections</span></li>
        </ul>
      </div>
    </section>

    <section class="panel details">
      <h2 class="title"><span>Details of "Mesh"</span><svg class="pin"><use href="#pin"/></svg></h2>
      <div class="body">
        <div class="props">
          <div class="key"><i class="box"></i>Target Skewness</div><div class="val tight">Default (0.900000)</div>
          <div class="key">Smoothing</div><div class="val">Medium</div>
          <div class="key">Mesh Metric</div><div class="val">Skewness</div>
          <div class="key"><i class="box"></i>Min</div><div class="val ro tight">5,7561e-002</div>
        </div>
        <div class="scroll"><svg viewBox="0 0 16 12"><path d="M1.500 11L8 3.500L14.500 11" fill="none" stroke="#505050" stroke-width="3.500"/></svg></div>
      </div>
    </section>
  </aside>

  <section class="viewport">
    <svg viewBox="721 303 1199 777">
      <defs>
        <linearGradient id="shade" x1="0" y1="0" x2="0" y2="1"><stop offset="0" stop-color="#303030"/><stop offset=".14" stop-color="#8c8c8c"/><stop offset=".4" stop-color="#c8c8c8"/><stop offset=".7" stop-color="#b4b4b4"/><stop offset="1" stop-color="#606060"/></linearGradient>
        <pattern id="rings" x="0" y="-28" width="42" height="56" patternUnits="userSpaceOnUse">
          <g fill="none" stroke="#000" stroke-width="1.600">
            <path d="M-28 0A17 28 0 0 1 -28 56M-21 0A17 28 0 0 1 -21 56M-14 0A17 28 0 0 1 -14 56M-7 0A17 28 0 0 1 -7 56M0 0A17 28 0 0 1 0 56M7 0A17 28 0 0 1 7 56M14 0A17 28 0 0 1 14 56M21 0A17 28 0 0 1 21 56M28 0A17 28 0 0 1 28 56M35 0A17 28 0 0 1 35 56"/>
            <path d="M0 2.500H42M0 6.500L6 5L14 7L20 5L30 7.500L36 5L42 6.500M0 11L7 13L12 10.500L21 12.500L27 10L35 13L42 11M0 18L6 16L14 18.500L20 16.500L29 19L35 16L42 18M0 23L8 25L14 22.500L21 25L28 22L36 25L42 23M0 30L7 28L14 31L22 29L28 31L35 28L42 30M0 36L7 37.500L14 35L21 37.500L29 35L36 37L42 36M0 43L9 41.500L16 43L23 41.500L31 43.500L42 43M0 48L12 48.500L24 47.500L42 48M0 52.500H42"/>
          </g>
        </pattern>
        <pattern id="facemesh" width="5" height="6" patternUnits="userSpaceOnUse"><path d="M0 0L5 4M5 0L1 6M0 3L3 6" stroke="#000" stroke-width="2.100"/></pattern>
      </defs>
      <g transform="translate(1269.500 1011.500) rotate(-30.050)">
        <rect x="0" y="-27.500" width="800" height="55" fill="url(#shade)"/>
        <rect x="0" y="-27.500" width="800" height="55" fill="url(#rings)"/>
        <path d="M0 -26.500H800M0 26.500H800" stroke="#000" stroke-width="3"/>
        <ellipse rx="17" ry="27.500" fill="#4a4a4a"/>
        <ellipse rx="17" ry="27.500" fill="url(#facemesh)" stroke="#000" stroke-width="1.500"/>
      </g>
      <path d="M1480 1077.500H1920V1080H1480Z"/>
      <path d="M1619 1079H1754V1080H1619ZM1895 1079H1920V1080H1895Z" fill="#909090"/>
      <text x="1445" y="1071" class="scale" textLength="67">0,000</text>
      <text x="1719" y="1071" class="scale" textLength="67">0,200</text>
    </svg>
  </section>
</main>
</body>
</html>
```

FILE: styles.css
```css
* { box-sizing: border-box; }
body {
  margin: 0;
  width: 1920px;
  height: 1080px;
  overflow: hidden;
  display: flex;
  flex-direction: column;
  background: #f0f0f0;
  color: #111;
  font: 23px/30px "Noto Sans", "Open Sans", sans-serif;
}
svg { display: block; flex: none; }
.sprite { position: absolute; width: 0; height: 0; }

/* toolbars */
.toolbars { position: relative; flex: none; }
.bar {
  display: grid;
  align-items: center;
  height: 49px;
  padding-left: 4px;
  overflow: hidden;
  white-space: nowrap;
  border-top: 2px solid #fbfbfb;
  border-bottom: 2px solid #a5a5a5;
}
.bar > span { margin-left: 1px; padding-bottom: 2px; }
.bar-menu > span { padding: 1px 0 0; }
.bar-menu { height: 52px; grid-template-columns: 23px 60px 65px 72px 79px 77px 72px 9px 26px 55px 49px 25px 31px 194px 51px 55px 56px 40px 33px 38px 146px 49px 40px; }
.bar-select { grid-template-columns: 27px 52px 68px 29px 33px 54px 47px 64px 55px 56px 55px 51px 21px 42px 28px 22px 53px 56px 54px 52px 20px 55px 55px 55px 56px 55px 46px 69px 48px 20px 41px 20px; }
.bar-graphics { grid-template-columns: 27px 34px 177px 34px 174px 315px 38px 135px 19px 38px 151px 59px 31px 121px 36px 148px 22px 55px 56px 55px 55px 52px 9px 25px 35px 15px; }
.bar-size { grid-template-columns: 26px 35px 53px 35px 34px 107px 33px 36px 99px 35px 33px 167px 34px 37px 198px 9px 23px 37px 119px 31px 90px; }
.bar-explode { grid-template-columns: 26px 55px 34px 82px 196px 305px 282px; }
.bar-mesh { height: 50px; border-bottom: 0; grid-template-columns: 13px 85px 30px 101px 20px 36px 73px 32px 36px 161px 33px 35px 121px 28px 21px 36px 165px 19px 37px 88px 19px 55px 53px 19px 41px 20px; }

.grip { width: 6px; height: 36px; border: solid #a5a5a5; border-width: 0 2px 2px 0; box-shadow: inset 1px 1px #fff; }
.sep { width: 3px; height: 37px; border-left: 2px solid #a0a0a0; border-right: 1px solid #fff; }
.edge { align-self: stretch; width: 4px; border-left: 2px solid #a0a0a0; border-right: 2px solid #fff; }
.ic { width: 33px; height: 33px; }
.w22 { width: 22px; } .w24 { width: 24px; } .w26 { width: 26px; } .w28 { width: 28px; } .w31 { width: 31px; } .w35 { width: 35px; }
.pair { width: 32px; height: 28px; }
.bar .pair { margin-bottom: 3px; }
.tagic { height: 24px; }
.caret { width: 15px; height: 9px; margin-bottom: 1px; color: #000; }
.gray, .combo .caret { color: #a0a0a0; }
.tight { letter-spacing: -0.3px; }
.wide { letter-spacing: 0.25px; }
.off { color: #a2a2a2; text-shadow: 1px 2px #fff; }
.bar > .raised { padding-bottom: 8px; }
.bar > .small { font-size: 22px; letter-spacing: -0.2px; }
.pressed {
  display: flex;
  width: 52px;
  height: 44px;
  padding: 6px 0 0 10px;
  background: #f8f8f8;
  border: solid #a0a0a0;
  border-width: 2px 0 0 2px;
  box-shadow: inset -2px -2px #fff;
}
.combo {
  display: flex;
  align-items: center;
  justify-content: space-between;
  height: 38px;
  width: 300px;
  padding: 0 7px 0 9px;
  border: 2px solid #fcfcfc;
  color: #7c7c7c;
  letter-spacing: -0.4px;
}
.bar-explode .combo { width: 282px; padding: 2px 10px 0 4px; letter-spacing: -0.5px; }
.slider { display: flex; align-items: flex-start; height: 27px; width: 279px; }
.thumb { width: 15px; height: 27px; }
.track { flex: 1; height: 6px; margin-top: 6px; background: #808080; border-bottom: 2px solid #fff; }
.callout { position: absolute; left: 600px; top: 0; width: 241px; height: 73px; border: 12px solid #ff1616; }

/* work area */
.work { flex: 1; display: flex; min-height: 0; }
.side { width: 716px; display: flex; flex-direction: column; background: #f7f7f7; overflow: hidden; }
.panel { display: flex; flex-direction: column; }
.title {
  display: flex;
  align-items: center;
  justify-content: space-between;
  flex: none;
  width: 708px;
  height: 41px;
  margin: 0;
  padding: 1px 10px 0 8px;
  font-size: 23px;
  font-weight: 400;
  letter-spacing: 0.1px;
  background: linear-gradient(90deg, #bfcddb, #d7e4f2);
}
.title.active { color: #fff; background: linear-gradient(90deg, #99b4d1, #b9d1ea); }
.pin { width: 15px; height: 20px; }
.panel > .body { width: 705px; border-top: 4px solid #747474; border-left: 4px solid #8c8c8c; border-right: 2px solid #e6e6e6; background: #fff; }
.outline { height: 578px; }
.outline > .body { flex: 1; border-bottom: 2px solid #e6e6e6; }
.filter { display: flex; align-items: center; height: 51px; padding: 3px 0 0 3px; background: #f0f0f0; border-bottom: 2px solid #a5a5a5; }
.filter > span { width: 80px; margin-left: 9px; padding-bottom: 2px; letter-spacing: -0.3px; }
.select { display: flex; justify-content: space-between; align-items: center; width: 194px; height: 34px; padding: 2px; background: #fff; }
.select span { margin-left: 2px; letter-spacing: -0.3px; }
.select b { display: flex; align-items: center; justify-content: center; width: 27px; height: 30px; background: #f0f0f0; }
.input { width: 294px; height: 34px; margin-left: 16px; background: #fff; }
.treebar { display: grid; align-items: center; height: 49px; padding: 0 0 2px 3px; background: #f0f0f0; grid-template-columns: 25px 47px 50px 53px 45px 54px 26px; }
.plus { width: 23px; height: 23px; }
.f { width: 32px; height: 32px; }

.tree { margin: 0; padding: 0; list-style: none; font: 22px/28px "DejaVu Sans Condensed", "DejaVu Sans", sans-serif; letter-spacing: -0.2px; }
.tree li { display: flex; align-items: center; height: 32.8px; }
.tree strong { margin: 1px 0 0 10px; font-size: 21.5px; font-family: "DejaVu Sans", sans-serif; letter-spacing: -0.3px; }
.tree span { margin-left: 7px; padding: 0 2px; height: 32px; line-height: 32px; white-space: nowrap; }
.tree .selected { color: #fff; background: #0078d7; outline: 2px dotted #d08030; outline-offset: -2px; }
.tree .pair { margin-bottom: 3px; }
.l0 { padding-left: 16px; }
.l1 { padding-left: 16px; }
.l1 .f { margin-left: 16px; }
.l2 { padding-left: 72px; }
.twig { width: 40px; height: 33px; margin-right: -3px; }
.l1 .twig { margin-right: 0; }
.twig.child { width: 96px; }
.ok { width: 17px; height: 33px; }
.dots { fill: none; stroke: #909090; stroke-width: 1.6; stroke-dasharray: 2 2; }

.details { margin-top: 11px; flex: 1; min-height: 0; }
.details > .body { display: flex; flex: 1; min-height: 0; }
.props { display: grid; grid-template-columns: 317px 320px; grid-auto-rows: 37px; margin-left: 27px; border-left: 2px solid #a0a0a0; }
.props div { display: flex; align-items: center; padding-left: 6px; border: solid #a5a5a5; border-width: 0 2px 2px 0; }
.props .ro { background: #e6e5e1; }
.box { width: 24px; height: 24px; margin-right: 8px; border: 2px solid #c4c4c4; background: #fff; }
.scroll { flex: 1; padding: 12px 0 0 9px; background: #f0f0f0; }
.scroll svg { width: 16px; height: 12px; }

.viewport { flex: 1; border: solid #747474; border-width: 5px 0 0 4px; background: linear-gradient(#6b8ade, #f2f5fd); }
.viewport svg { width: 1200px; height: 777px; }

/* lettering inside icons */
.scale { font: 28px "Liberation Sans", sans-serif; fill: #333; }
.ic-abc { font: bold 22px "Liberation Sans", sans-serif; }
.ic-serif { font: 27px "Liberation Serif", serif; }
.ic-i { font: bold 30px "Liberation Serif", serif; fill: #0020ff; }
.ic-mono { font: bold 11px "Liberation Mono", monospace; }
.ic-xyz { font: bold 13px "Liberation Mono", monospace; }
.ic-iso { font: bold 15px "Liberation Mono", monospace; }
.ic-tag { font: 17px "Liberation Sans", sans-serif; fill: #a0a0a0; }
.ic-az { font: bold 19px "Liberation Sans", sans-serif; }
.az-a { fill: #2c4890; }
.az-z { fill: #c01828; }
```
